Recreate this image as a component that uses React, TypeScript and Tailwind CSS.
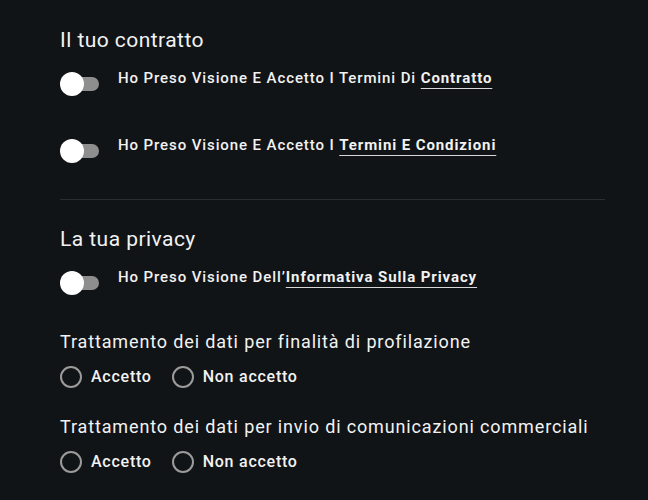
import React from 'react';

function Toggle() {
  return (
    <div className="relative w-[40px] h-[24px] shrink-0">
      <span className="absolute left-[6px] top-[5px] w-[33px] h-[14px] rounded-full bg-[#8e8e8e]" />
      <span className="absolute left-0 top-0 w-[24px] h-[24px] rounded-full bg-white" />
    </div>
  );
}

function ToggleRow({ text, link }: { text: string; link: string }) {
  return (
    <div className="flex items-start gap-[18px]">
      <Toggle />
      <p className="text-[15px] leading-[20px] font-medium tracking-[0.9px] text-[#f2f2f2] -mt-[4px]">
        {text}
        <a className="font-bold underline decoration-[#d6d6d6] decoration-1 underline-offset-[5px]">
          {link}
        </a>
      </p>
    </div>
  );
}

function Radio({ label }: { label: string }) {
  return (
    <label className="flex items-center gap-[9px]">
      <span className="w-[22px] h-[22px] rounded-full border-2 border-[#9b9b9b]" />
      <span className="text-[16px] font-medium tracking-[0.75px] text-[#f2f2f2]">{label}</span>
    </label>
  );
}

function Consent({ title }: { title: string }) {
  return (
    <div className="flex flex-col gap-[11px]">
      <h3 className="text-[18px] leading-[24px] tracking-[0.86px] text-[#f2f2f2]">{title}</h3>
      <div className="flex items-center gap-[20px]">
        <Radio label="Accetto" />
        <Radio label="Non accetto" />
      </div>
    </div>
  );
}

export default function App() {
  return (
    <div className="min-h-[500px] w-full bg-[#111416] font-['Roboto',sans-serif]">
      <div className="w-[545px] ml-[60px] pt-[26px]">
        <h2 className="text-[21px] leading-[28px] tracking-[0.45px] text-[#f2f2f2]">Il tuo contratto</h2>
        <div className="flex flex-col gap-[43px] mt-[18px]">
          <ToggleRow text="Ho Preso Visione E Accetto I Termini Di " link="Contratto" />
          <ToggleRow text="Ho Preso Visione E Accetto I " link="Termini E Condizioni" />
        </div>
        <div className="h-px bg-[#2a2e30] mt-[36px]" />
        <h2 className="text-[21px] leading-[28px] tracking-[0.45px] text-[#f2f2f2] mt-[25px]">La tua privacy</h2>
        <div className="mt-[18px]">
          <ToggleRow text="Ho Preso Visione Dell’" link="Informativa Sulla Privacy" />
        </div>
        <div className="flex flex-col gap-[26px] mt-[35px]">
          <Consent title="Trattamento dei dati per finalità di profilazione" />
          <Consent title="Trattamento dei dati per invio di comunicazioni commerciali" />
        </div>
      </div>
    </div>
  );
}
